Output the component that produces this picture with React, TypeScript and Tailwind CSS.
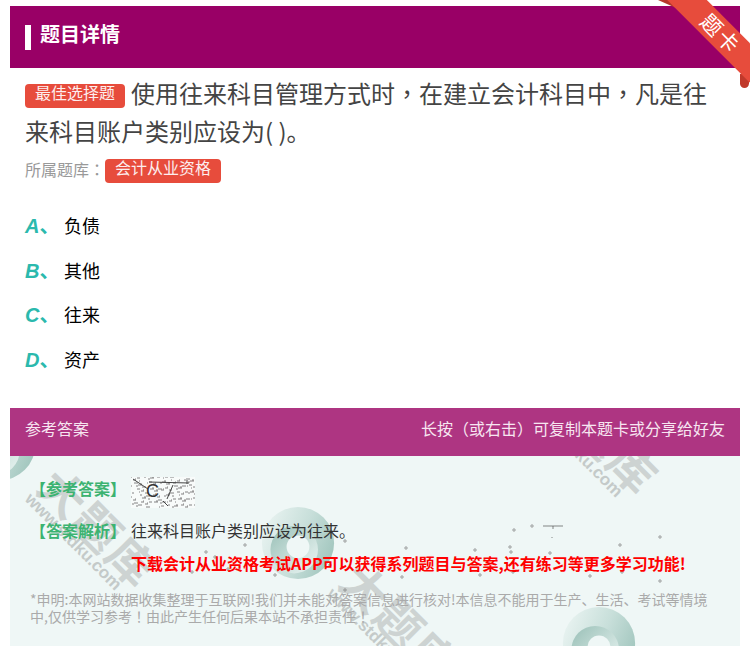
import React from 'react';

const options = [
  { key: 'A', text: '负债' },
  { key: 'B', text: '其他' },
  { key: 'C', text: '往来' },
  { key: 'D', text: '资产' },
];

const specks = [
  [160, 538], [206, 552], [245, 545], [215, 557], [192, 572], [228, 569], [275, 575], [345, 541], [514, 530], [510, 547],
  [532, 526], [660, 537], [406, 548], [475, 550], [511, 552], [550, 553], [402, 577], [480, 575], [513, 572], [590, 576],
  [622, 572], [660, 581], [345, 590], [330, 565], [620, 545],
];

// scratchy marks on the scanned answer image
const noise = Array.from({ length: 130 }, (_, i) => ({
  x: (i * 37) % 64,
  y: (i * 23 + (i % 7) * 5) % 31,
  w: 1 + (i % 4),
}));

// punctuation sits in the middle of the cell in the reference
const P = ({ children }: { children: React.ReactNode }) => (
  <span className="font-['Noto_Sans_CJK_TC',sans-serif]">{children}</span>
);

const Ring = ({ className }: { className: string }) => (
  <svg className={className} viewBox="0 0 80 80" fill="none">
    <defs>
      <linearGradient id="ringOuter" x1="0" y1="0.2" x2="1" y2="0.6">
        <stop offset="0" stopColor="#eaf4f2" />
        <stop offset="0.55" stopColor="#c8dfda" />
        <stop offset="1" stopColor="#a3c7bf" />
      </linearGradient>
      <linearGradient id="ringInner" x1="0" y1="0" x2="1" y2="1">
        <stop offset="0" stopColor="#98bfb6" />
        <stop offset="0.7" stopColor="#d5e7e3" />
        <stop offset="1" stopColor="#eaf4f2" />
      </linearGradient>
    </defs>
    <circle cx="40" cy="40" r="38" fill="url(#ringOuter)" />
    <circle cx="36" cy="47" r="25" fill="url(#ringInner)" />
    <circle cx="40" cy="44" r="12" fill="#eff7f6" />
  </svg>
);

const Watermark = ({ className }: { className: string }) => (
  <div className={`absolute rotate-45 origin-top-left whitespace-nowrap text-[#cdd3d2] ${className}`}>
    <div className="text-[46px] leading-[46px] font-bold tracking-[2px]">大题库</div>
    <div className="-mt-[3px] font-['Liberation_Sans',sans-serif] text-[17px] leading-[20px] font-bold text-[#c4cac9]">www.stdku.com</div>
  </div>
);

export default function App() {
  return (
    <div className="relative h-[646px] overflow-hidden bg-white px-[10px] pt-[6px] font-['Noto_Sans_CJK_SC',sans-serif]">
      <div className="flex h-[62px] items-center bg-[#990066] pl-[15px]">
        <span className="mr-[9px] mt-[1px] h-[25px] w-[6px] bg-white" />
        <span className="pb-[6px] text-[20px] font-bold text-white">题目详情</span>
      </div>

      {/* corner ribbon */}
      <div className="absolute right-0 top-0 h-[90px] w-[100px] overflow-hidden">
        <svg className="absolute left-[6px] top-0 h-[10px] w-[20px]" viewBox="0 0 20 10">
          <path d="M2 0h14l4 8z" fill="#b5372b" />
        </svg>
        <div className="absolute right-[1px] top-[74px] h-[14px] w-[9px] rounded-b-[5px] bg-[#c0392b]" />
        <div className="absolute left-[-10px] top-[9px] flex h-[28px] w-[140px] rotate-45 items-center justify-center bg-[#e74c3c] text-[21px] tracking-[2px] text-white">
          <span className="ml-[30px]">题卡</span>
        </div>
      </div>

      <div className="px-[15px] pt-[6px]">
        <p className="text-[24px] leading-[38px] text-[#444]">
          <span className="mr-[6px] inline-block h-[24px] rounded-[4px] bg-[#e74c3c] px-[10px] align-middle text-[16px] leading-[16px] text-[#fdeeee]">最佳选择题</span>
          使用往来科目管理方式时<P>，</P>在建立会计科目中<P>，</P>凡是往来科目账户类别应设为( )。
        </p>
        <div className="mt-[9px] flex h-[24px] items-start text-[16px] leading-[20px] text-[#999]">
          所属题库<P>：</P>
          <span className="h-[24px] rounded-[4px] bg-[#e74c3c] px-[10px] text-[16px] leading-[16px] text-[#fdeeee]">会计从业资格</span>
        </div>
        <ul className="mt-[20px]">
          {options.map((o) => (
            <li key={o.key} className="flex h-[44.7px] items-center text-[18px] text-black">
              <span className="w-[39px] text-[20px] font-bold text-[#2bb9ad]">
                <span className="font-['Liberation_Sans',sans-serif] italic">{o.key}</span>、
              </span>
              {o.text}
            </li>
          ))}
        </ul>
      </div>

      <div className="mt-[26px] flex h-[48px] items-center justify-between bg-[#ae3582] px-[15px] pb-[7px] text-[16px] text-[#f7e6f1]">
        <span>参考答案</span>
        <span>长按<P>（</P>或右击<P>）</P>可复制本题卡或分享给好友</span>
      </div>

      <div className="relative h-[200px] overflow-hidden bg-[#eff7f6] px-[20px] pt-[21px]">
        {/* watermark layer */}
        <Ring className="absolute left-[-47px] top-[-48px] h-[74px] w-[74px]" />
        <Ring className="absolute left-[250px] top-[49px] h-[76px] w-[76px]" />
        <Ring className="absolute left-[551px] top-[149px] h-[76px] w-[76px]" />
        <Watermark className="left-[55px] top-[3px]" />
        <Watermark className="left-[357px] top-[98px]" />
        <Watermark className="left-[556px] top-[-90px]" />
        <svg className="absolute left-[-10px] top-[-456px] h-[646px] w-[750px]" viewBox="0 0 750 646" fill="none">
          {specks.map(([x, y]) => (
            <circle key={`${x}-${y}`} cx={x} cy={y} r="1.2" stroke="#777" strokeWidth="0.7" />
          ))}
          <path d="M543 526h20M553 526v3M552 537v1" stroke="#555" strokeWidth="0.7" />
        </svg>

        <div className="relative">
          <div className="flex h-[31px] items-center">
            <span className="w-[101px] pb-[8px] text-[16px] font-bold text-[#3cb371]">【参考答案】</span>
            <div className="relative h-[31px] w-[64px] overflow-hidden bg-[#f8fbfa] text-[#333]">
              <svg className="absolute inset-0" viewBox="0 0 64 31" fill="none">
                {noise.map((n, i) => (
                  <path key={i} d={`M${n.x} ${n.y}h${n.w}`} stroke="#666" strokeWidth="0.8" />
                ))}
                <path d="M2 2l15 10M18 5l40 1M42 8l-6 14M32 24l5 5M56 3v4" stroke="#444" strokeWidth="1" />
              </svg>
              <span className="absolute left-[15px] top-[1px] font-['Liberation_Sans',sans-serif] text-[18px] leading-[26px]">C</span>
            </div>
          </div>
          <div className="mt-[9px] flex h-[26px] items-center text-[16px] text-[#333]">
            <span className="w-[101px] font-bold text-[#3cb371]">【答案解析】</span>
            往来科目账户类别应设为往来。
          </div>
          <div className="mt-[7px] pl-[101px] text-[16px] font-bold leading-[26px] text-[#ff0000] whitespace-nowrap">下载会计从业资格考试APP可以获得系列题目与答案,还有练习等更多学习功能!</div>
          <p className="mt-[15px] text-[14px] leading-[17px] text-[#aaa]">*申明:本网站数据收集整理于互联网!我们并未能对答案信息进行核对!本信息不能用于生产、生活、考试等情境中,仅供学习参考<P>！</P>由此产生任何后果本站不承担责任<P>！</P></p>
        </div>
      </div>
    </div>
  );
}
